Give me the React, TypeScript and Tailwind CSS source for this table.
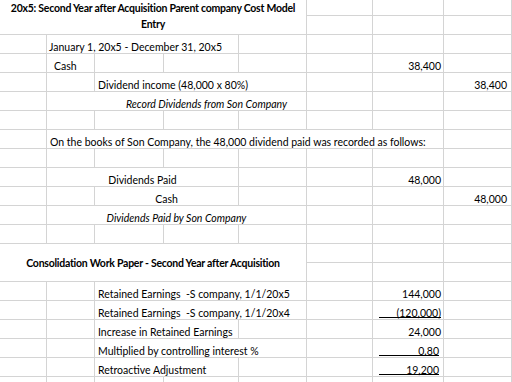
import * as React from "react";

type Cell = {
  s?: number;
  r?: number;
  t?: React.ReactNode;
  c?: string;
  u?: string;
};

const spans: Record<number, string> = {
  1: "",
  2: "col-span-2",
  3: "col-span-3",
  4: "col-span-4",
  5: "col-span-5",
  6: "col-span-6",
};

const blank = (n: number): Cell[] => Array.from({ length: n }, () => ({}));

const num = "items-end justify-end pr-[2px]";
const numH = "items-end justify-end pr-[4px]";
const txt = "items-end";

const rows: Cell[][] = [
  [
    {
      s: 5,
      r: 2,
      c: "flex-col items-center justify-start font-bold leading-[16px] tracking-[-0.25px]",
      t: (
        <>
          <span>20x5: Second Year after Acquisition Parent company Cost Model</span>
          <span>Entry</span>
        </>
      ),
    },
    ...blank(3),
  ],
  blank(3),
  [{}, { s: 3, t: "January 1, 20x5 - December 31, 20x5", c: `${txt} pl-[2px]` }, ...blank(4)],
  [{}, { t: "Cash", c: `${txt} pl-[7px]` }, {}, {}, {}, {}, { t: "38,400", c: num }, {}],
  [{}, {}, { s: 3, t: "Dividend income (48,000 x 80%)", c: `${txt} pl-[3px]` }, {}, {}, { t: "38,400", c: numH }],
  [{}, { s: 4, t: "Record Dividends from Son Company", c: `${txt} pl-[79px] italic` }, {}, {}, {}],
  blank(8),
  [{}, { s: 6, t: "On the books of Son Company, the 48,000 dividend paid was recorded as follows:", c: `${txt} pl-[3px]` }, {}],
  blank(8),
  [{}, { s: 3, t: "Dividends Paid", c: `${txt} justify-center` }, {}, {}, { t: "48,000", c: num }, {}],
  [{}, {}, { s: 2, t: "Cash", c: `${txt} justify-center` }, {}, {}, {}, { t: "48,000", c: numH }],
  [{}, { s: 4, t: "Dividends Paid by Son Company", c: `${txt} justify-center italic` }, {}, {}, {}],
  blank(8),
  [
    {
      s: 5,
      r: 2,
      c: "items-center justify-center font-bold tracking-[-0.25px]",
      t: "Consolidation Work Paper - Second Year after Acquisition",
    },
    ...blank(3),
  ],
  blank(3),
  [{}, {}, { s: 3, t: "Retained Earnings  -S company, 1/1/20x5", c: `${txt} pl-[3px] whitespace-pre` }, {}, { t: "144,000", c: num }, {}],
  [{}, {}, { s: 3, t: "Retained Earnings  -S company, 1/1/20x4", c: `${txt} pl-[3px] whitespace-pre` }, {}, { t: "(120,000)", c: num, u: "right-[2px]" }, {}],
  [{}, {}, { s: 2, t: "Increase in Retained Earnings", c: `${txt} pl-[3px]` }, {}, {}, { t: "24,000", c: num }, {}],
  [{}, {}, { s: 3, t: "Multiplied by controlling interest %", c: `${txt} pl-[3px]` }, {}, { t: "0.80", c: numH, u: "right-[4px]" }, {}],
  [{}, {}, { s: 2, t: "Retroactive Adjustment", c: `${txt} pl-[3px]` }, {}, {}, { t: "19,200", c: numH, u: "right-[4px]" }, {}],
  blank(8),
];

function SheetCell({ cell }: { cell: Cell }) {
  return (
    <div
      className={[
        "relative flex whitespace-nowrap border-r border-b border-[#d4d4d4] leading-[12px]",
        spans[cell.s ?? 1],
        cell.r === 2 ? "row-span-2" : "",
        cell.c ?? "",
      ].join(" ")}
    >
      {cell.t}
      {cell.u && <span className={`absolute bottom-[1px] left-[6px] h-px bg-black ${cell.u}`} />}
    </div>
  );
}

export default function App() {
  return (
    <div className="h-[382px] w-[512px] overflow-hidden bg-white font-['Lato','Liberation_Sans',sans-serif] text-[10.5px] text-black">
      <div className="grid grid-cols-[47px_48px_69px_75px_68px_66px_71px_68px] grid-rows-[16px] auto-rows-[19px]">
        {rows.flatMap((row, i) => row.map((cell, j) => <SheetCell key={`${i}-${j}`} cell={cell} />))}
      </div>
    </div>
  );
}
